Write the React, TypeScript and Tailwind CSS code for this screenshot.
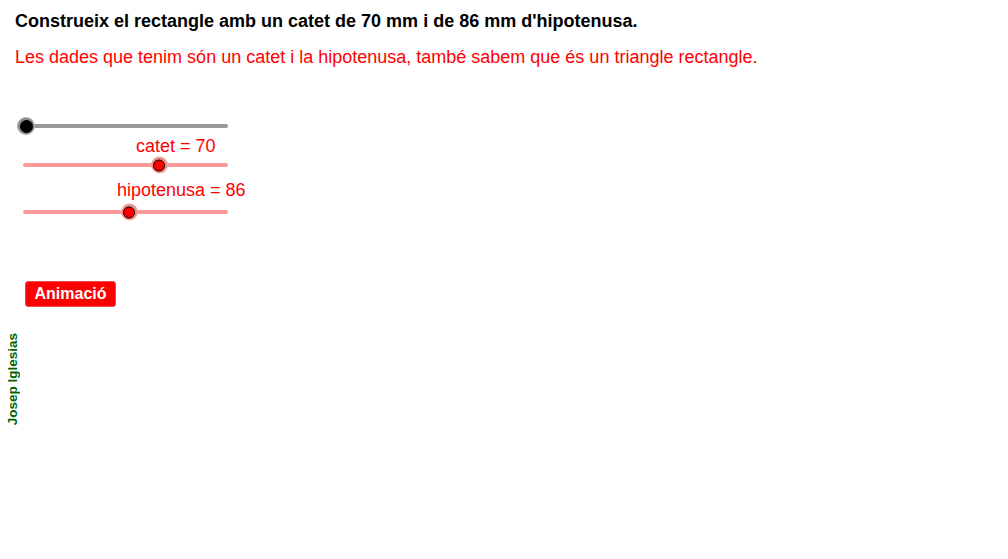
import React from "react";

function Knob({ x, size, inner, color, halo }: { x: number; size: number; inner: string; color: string; halo: string }) {
  return (
    <div
      className={`absolute top-1/2 -translate-y-1/2 rounded-full ${halo} flex items-center justify-center`}
      style={{ left: x - size / 2, width: size, height: size }}
    >
      <div className={`${inner} rounded-full ${color} border border-black`} />
    </div>
  );
}

function Track({ color }: { color: string }) {
  return <div className={`w-full h-[4px] rounded-full ${color}`} />;
}

export default function App() {
  return (
    <div
      className="relative w-[1008px] h-[559px] bg-white overflow-hidden"
      style={{ fontFamily: '"Liberation Sans", Arial, sans-serif' }}
    >
      <div className="pl-[15px] pt-[10px] text-[18px] leading-[22px] font-bold text-black">
        Construeix el rectangle amb un catet de 70 mm i de 86 mm d'hipotenusa.
      </div>
      <div className="pl-[15px] mt-[14px] text-[18px] leading-[22px] text-[#ff0000]">
        Les dades que tenim són un catet i la hipotenusa, també sabem que és un triangle rectangle.
      </div>

      <div className="flex flex-col w-[260px] mt-[50px] text-[18px] leading-[22px] text-[#ff0000]">
        <div className="relative ml-[26px] w-[202px] h-[16px] flex items-center">
          <Track color="bg-[#999999]" />
          <Knob x={0} size={18} inner="w-[13px] h-[13px]" color="bg-black" halo="bg-[#8a8a8a] border border-[#b0b0b0]" />
        </div>

        <div className="ml-[136px] mt-[1px] whitespace-nowrap">catet = 70</div>
        <div className="relative ml-[23px] w-[205px] h-[16px] flex items-center">
          <Track color="bg-[#ff9999]" />
          <Knob x={136} size={17} inner="w-[12px] h-[12px]" color="bg-[#ff0000]" halo="bg-[#e88a8a] border border-[#f4a8a8]" />
        </div>

        <div className="ml-[117px] mt-[6px] whitespace-nowrap">hipotenusa = 86</div>
        <div className="relative ml-[23px] mt-[3px] w-[205px] h-[16px] flex items-center">
          <Track color="bg-[#ff9999]" />
          <Knob x={106} size={17} inner="w-[12px] h-[12px]" color="bg-[#ff0000]" halo="bg-[#e88a8a] border border-[#f4a8a8]" />
        </div>
      </div>

      <div className="pl-[25px] mt-[61px]">
        <button className="h-[26px] w-[91px] rounded-[3px] bg-[#ff0000] border border-[#e05050] text-white font-bold text-[16px] leading-[24px] flex items-center justify-center">
          Animació
        </button>
      </div>

      <div className="pl-[6px] mt-[26px]">
        <div className="text-[13.5px] leading-[14px] font-bold text-[#006400] whitespace-nowrap [writing-mode:vertical-rl] rotate-180">
          Josep Iglesias
        </div>
      </div>
    </div>
  );
}
